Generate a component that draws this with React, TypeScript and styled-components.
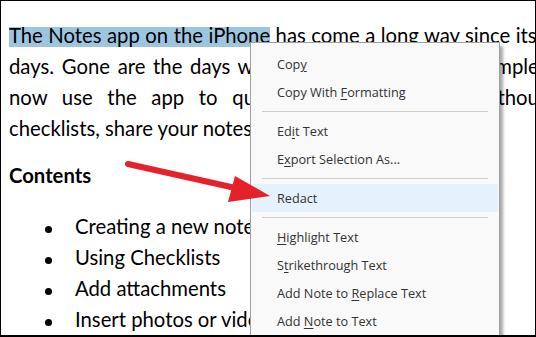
import React from "react";
import styled, { createGlobalStyle } from "styled-components";

const Global = createGlobalStyle`
  html, body { margin: 0; padding: 0; background: #fff; }
  * { box-sizing: border-box; }
`;

const Frame = styled.div`
  position: relative;
  width: 536px;
  height: 337px;
  border: 1px solid #000;
  border-bottom-width: 2px;
  overflow: hidden;
  background: #fff;
`;

const Doc = styled.div`
  padding: 19px 0 0 8px;
  font-family: Lato, "Liberation Sans", sans-serif;
  font-size: 20.3px;
  line-height: 31px;
  color: #000;
`;

const Line = styled.div<{ $spacing?: number }>`
  white-space: nowrap;
  word-spacing: ${(p) => p.$spacing ?? 0}px;
`;

const Selected = styled.span`
  background: linear-gradient(#9ec5e0, #9ec5e0) 0 4px / 100% 21px no-repeat;
`;

const Heading = styled.div`
  margin-top: 16px;
  font-weight: 700;
`;

const List = styled.ul`
  list-style: none;
  margin: 20px 0 0;
  padding: 0;
`;

const Item = styled.li`
  position: relative;
  padding-left: 66px;
  white-space: nowrap;
  &::before {
    content: "";
    position: absolute;
    left: 36px;
    top: 15px;
    width: 7px;
    height: 7px;
    border-radius: 50%;
    background: #000;
  }
`;

const Menu = styled.div`
  position: absolute;
  left: 249px;
  top: 41px;
  width: 250px;
  height: 320px;
  padding: 7px 1px 0;
  background: #f9f9f9;
  border: 1px solid #a0a0a0;
  box-shadow: 3px 4px 3px rgba(0, 0, 0, 0.35);
  font-family: "Open Sans", "Noto Sans", sans-serif;
  font-size: 12.7px;
  color: #333;
`;

const MenuItem = styled.div<{ $active?: boolean }>`
  height: 28px;
  display: flex;
  align-items: center;
  padding-left: 25px;
  background: ${(p) => (p.$active ? "#e5f1fb" : "transparent")};
`;

const Label = styled.span`
  white-space: pre;
  u { text-decoration-thickness: 1px; text-underline-offset: 2px; }
`;

const Separator = styled.div`
  height: 11px;
  margin: 0 10px;
  display: flex;
  align-items: center;
  &::after {
    content: "";
    flex: 1;
    height: 1px;
    background: #cfcfcf;
  }
`;

const Overlay = styled.svg`
  position: absolute;
  left: -1px;
  top: -1px;
  pointer-events: none;
`;

export default function App() {
  return (
    <>
      <Global />
      <Frame>
        <Doc>
          <Line $spacing={0.3}>
            <Selected>The Notes app on the iPhone</Selected> has come a long way since its early
          </Line>
          <Line $spacing={2.5}>days. Gone are the days when you could only take simple notes. You can</Line>
          <Line $spacing={9.5}>now use the app to quickly jot down ideas, without</Line>
          <Line>checklists, share your notes and more.</Line>
          <Heading>Contents</Heading>
          <List>
            <Item>Creating a new note</Item>
            <Item>Using Checklists</Item>
            <Item>Add attachments</Item>
            <Item>Insert photos or videos</Item>
          </List>
        </Doc>
        <Menu>
          <MenuItem><Label>Cop<u>y</u></Label></MenuItem>
          <MenuItem><Label>Copy With <u>F</u>ormatting</Label></MenuItem>
          <Separator />
          <MenuItem><Label>Ed<u>i</u>t Text</Label></MenuItem>
          <MenuItem><Label>E<u>x</u>port Selection As...</Label></MenuItem>
          <Separator />
          <MenuItem $active><Label>Redact</Label></MenuItem>
          <Separator />
          <MenuItem><Label><u>H</u>ighlight Text</Label></MenuItem>
          <MenuItem><Label>S<u>t</u>rikethrough Text</Label></MenuItem>
          <MenuItem><Label>Add Note to <u>R</u>eplace Text</Label></MenuItem>
          <MenuItem><Label>Add <u>N</u>ote to Text</Label></MenuItem>
        </Menu>
        <Overlay width="536" height="337" viewBox="0 0 536 337">
          <line x1="128" y1="164" x2="240" y2="189" stroke="#e5222a" strokeWidth="6" strokeLinecap="round" />
          <polygon points="235,176 270,196 228,202" fill="#e5222a" />
        </Overlay>
      </Frame>
    </>
  );
}
